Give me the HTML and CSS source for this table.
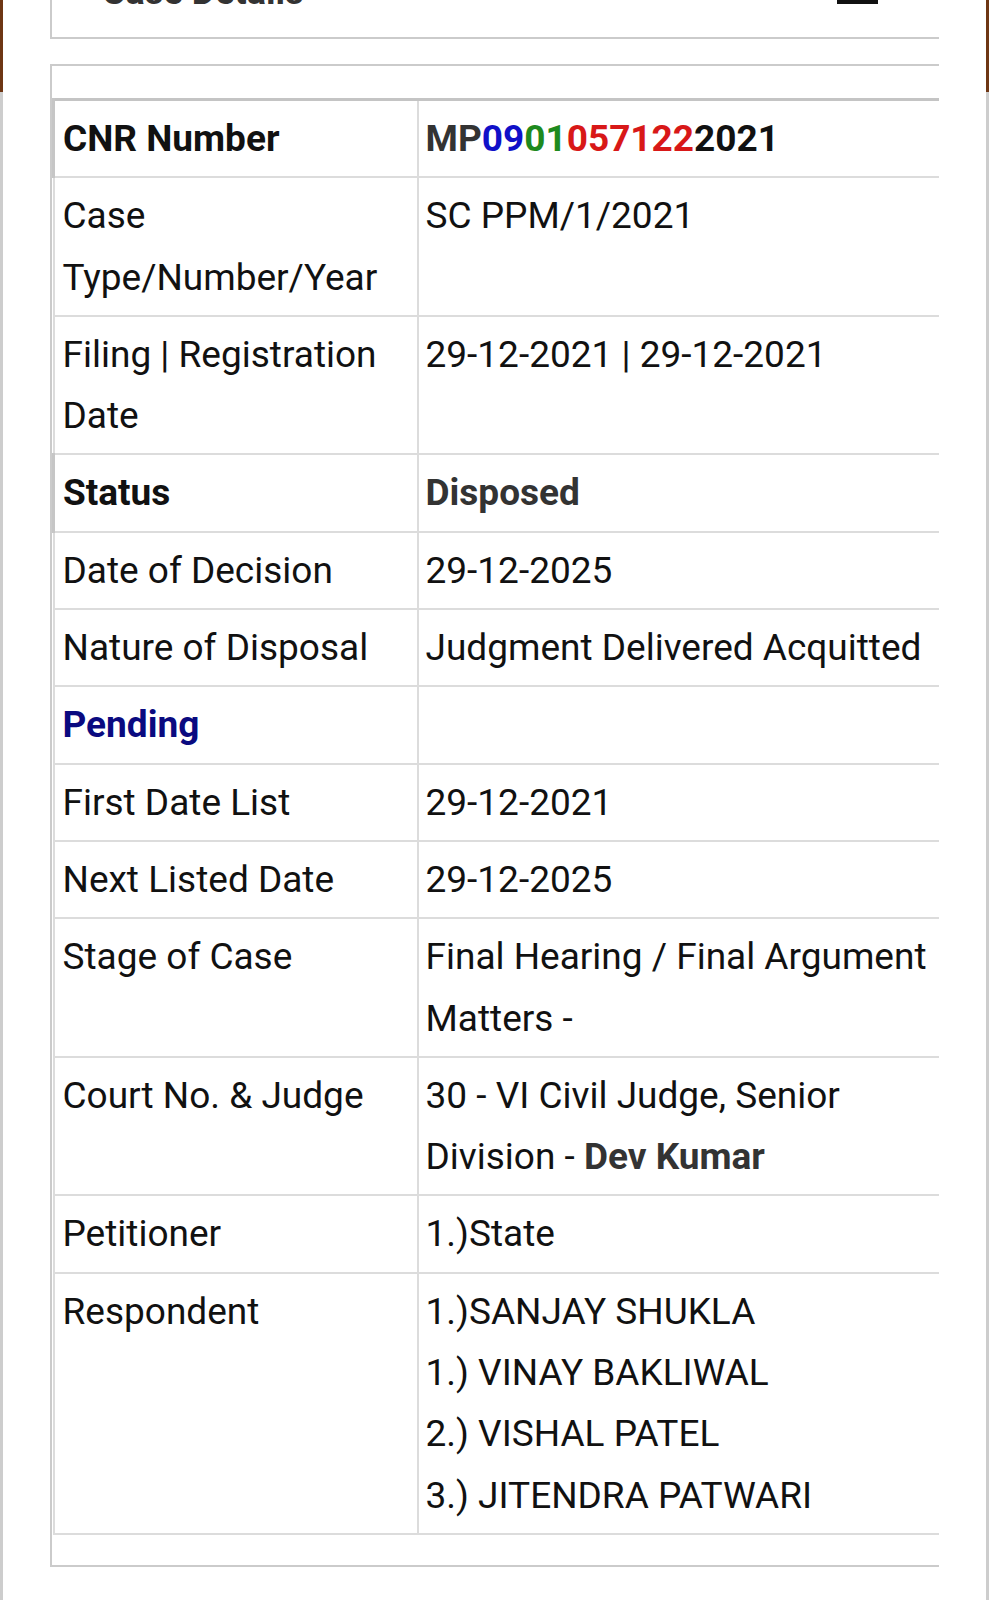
FILE: index.html
```html
<!DOCTYPE html>
<html lang="en">
<head>
<meta charset="utf-8">
<title>Case Details</title>
<link rel="stylesheet" href="styles.css">
</head>
<body>
<div class="screen">
  <section class="panel panel-top">
    <div class="panel-head">
      <h2 class="panel-title">Case Details</h2>
      <span class="toggle"></span>
    </div>
  </section>
  <section class="panel panel-main">
    <table class="case-table">
      <colgroup><col class="c-label"><col class="c-value"></colgroup>
      <tbody>
        <tr class="row-head">
          <th class="label">CNR Number</th>
          <td class="value strong"><span class="cnr-state">MP</span><span class="cnr-dist">09</span><span class="cnr-est">01</span><span class="cnr-num">057122</span><span class="cnr-year">2021</span></td>
        </tr>
        <tr>
          <td class="label">Case Type/Number/Year</td>
          <td class="value">SC PPM/1/2021</td>
        </tr>
        <tr>
          <td class="label">Filing | Registration Date</td>
          <td class="value">29-12-2021 | 29-12-2021</td>
        </tr>
        <tr class="row-head">
          <th class="label">Status</th>
          <td class="value strong">Disposed</td>
        </tr>
        <tr>
          <td class="label">Date of Decision</td>
          <td class="value">29-12-2025</td>
        </tr>
        <tr>
          <td class="label">Nature of Disposal</td>
          <td class="value">Judgment Delivered Acquitted</td>
        </tr>
        <tr>
          <td class="label pending">Pending</td>
          <td class="value"></td>
        </tr>
        <tr>
          <td class="label">First Date List</td>
          <td class="value">29-12-2021</td>
        </tr>
        <tr>
          <td class="label">Next Listed Date</td>
          <td class="value">29-12-2025</td>
        </tr>
        <tr>
          <td class="label">Stage of Case</td>
          <td class="value">Final Hearing / Final Argument Matters -</td>
        </tr>
        <tr>
          <td class="label">Court No. &amp; Judge</td>
          <td class="value">30 - VI Civil Judge, Senior Division - <b class="judge">Dev Kumar</b></td>
        </tr>
        <tr>
          <td class="label">Petitioner</td>
          <td class="value">1.)State</td>
        </tr>
        <tr>
          <td class="label">Respondent</td>
          <td class="value">
            <div class="party">1.)SANJAY SHUKLA</div>
            <div class="party">1.) VINAY BAKLIWAL</div>
            <div class="party">2.) VISHAL PATEL</div>
            <div class="party">3.) JITENDRA PATWARI</div>
          </td>
        </tr>
      </tbody>
    </table>
  </section>
</div>
</body>
</html>
```

FILE: styles.css
```css
html, body {
  margin: 0;
  padding: 0;
  background: #ffffff;
}

body {
  font-family: Roboto, "Noto Sans", "Liberation Sans", sans-serif;
  color: #111111;
}

.screen {
  width: 989px;
  min-height: 1600px;
  box-sizing: border-box;
  padding-left: 50px;
  overflow: hidden;
  background:
    linear-gradient(#6e3614 0, #6e3614 92px, #cdcdcd 92px) left top / 3px 100% no-repeat,
    linear-gradient(#6e3614 0, #6e3614 92px, #cdcdcd 92px) right top / 3px 100% no-repeat,
    #ffffff;
}

.panel {
  width: 889px;
  box-sizing: border-box;
  border-left: 2px solid #cbcbcb;
  border-bottom: 2px solid #cbcbcb;
}

.panel-top {
  display: flex;
  flex-direction: column;
  height: 39px;
}

.panel-head {
  display: flex;
  justify-content: space-between;
  align-items: flex-end;
  margin-top: -28px;
  height: 40px;
  flex: none;
  padding: 0 61px 0 50px;
}

.panel-title {
  margin: 0;
  font-size: 36px;
  line-height: 40px;
  font-weight: 700;
  color: #333333;
}

.toggle {
  width: 41px;
  height: 20px;
  margin-bottom: 8px;
  background: #111111;
}

.panel-main {
  margin-top: 25px;
  border-top: 2px solid #cbcbcb;
  padding: 32px 0 30px 0;
}

.case-table {
  width: 100%;
  border-collapse: collapse;
  table-layout: fixed;
  border-top: 3px solid #c4c4c4;
}

.c-label {
  width: 364px;
}

.case-table th,
.case-table td {
  font-size: 37px;
  line-height: 61.3px;
  padding: 7px 8px;
  text-align: left;
  vertical-align: top;
  font-weight: 400;
  color: #111111;
  border-bottom: 2px solid #dcdcdc;
}

.case-table .label {
  border-left: 2px solid #dcdcdc;
  border-right: 2px solid #dcdcdc;
}

.case-table .value {
  padding-left: 7px;
  padding-right: 0;
}

.row-head .label {
  font-weight: 700;
  border-left: 3px solid #c6c6c6;
}

.case-table .strong {
  font-weight: 700;
  color: #333333;
}

.cnr-state { color: #333333; }
.cnr-dist { color: #1010c8; }
.cnr-est { color: #1e8a1e; }
.cnr-num { color: #d81818; }
.cnr-year { color: #111111; }

.case-table .pending {
  font-weight: 700;
  color: #0a0a80;
}

.judge {
  font-weight: 700;
  color: #333333;
}

.party {
  display: block;
}
```
